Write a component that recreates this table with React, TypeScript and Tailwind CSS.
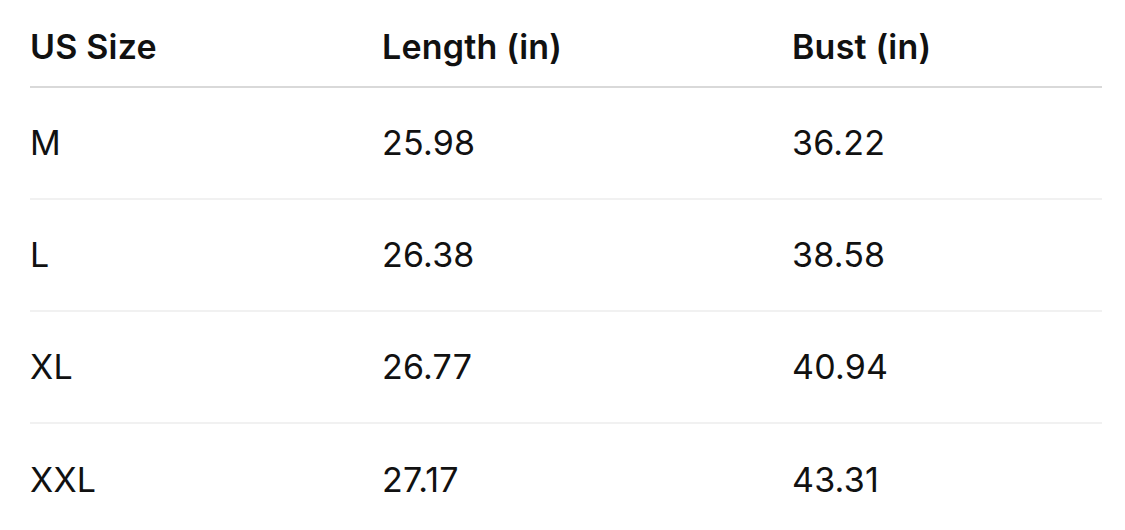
const ROWS = [
  { size: 'M', length: '25.98', bust: '36.22' },
  { size: 'L', length: '26.38', bust: '38.58' },
  { size: 'XL', length: '26.77', bust: '40.94' },
  { size: 'XXL', length: '27.17', bust: '43.31' },
];

export default function App() {
  return (
    <div
      className="min-h-screen bg-white pl-[30px] pr-[23px] text-[#111111]"
      style={{ fontFamily: 'Inter, "Noto Sans", sans-serif' }}
    >
      {/* Header */}
      <div className="grid grid-cols-[352px_410px_1fr] border-b-2 border-[#d9d9d9] pt-[27px] pb-[19px] text-[34px] font-semibold leading-[40px] tracking-[0.2px]">
        <div>US Size</div>
        <div>Length (in)</div>
        <div>Bust (in)</div>
      </div>

      {/* Rows */}
      {ROWS.map((row, i) => (
        <div
          key={row.size}
          className={`grid h-[112px] grid-cols-[352px_410px_1fr] items-center text-[34px] leading-[40px] tracking-[0.2px] ${
            i < ROWS.length - 1 ? 'border-b-2 border-[#f1f1f1]' : ''
          }`}
        >
          <div>{row.size}</div>
          <div>{row.length}</div>
          <div>{row.bust}</div>
        </div>
      ))}
    </div>
  );
}
